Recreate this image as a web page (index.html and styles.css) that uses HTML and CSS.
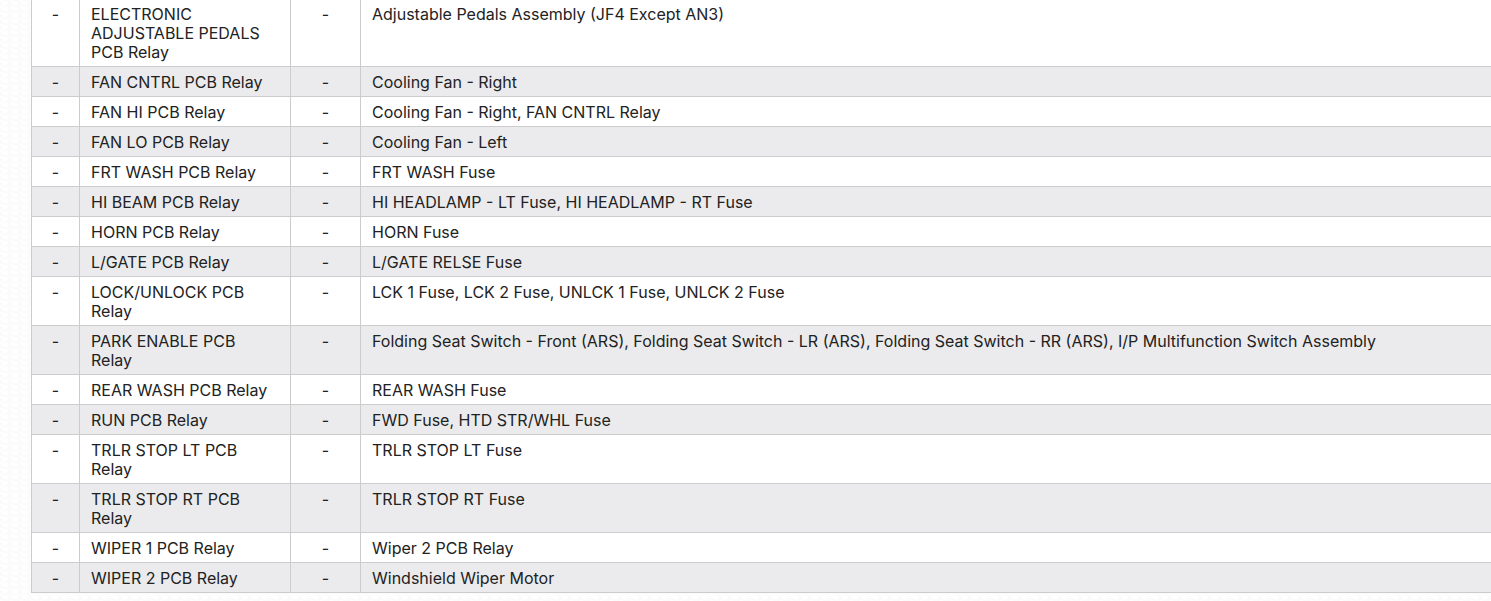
FILE: index.html
```html
<!DOCTYPE html>
<html lang="en">
<head>
<meta charset="utf-8">
<title>Relays</title>
<link rel="stylesheet" href="styles.css">
</head>
<body>
<div class="page">
<table class="relays">
<colgroup>
<col class="c-num"><col class="c-name"><col class="c-dash"><col class="c-desc">
</colgroup>
<tbody>
<tr><td class="ctr">-</td><td>ELECTRONIC ADJUSTABLE PEDALS PCB Relay</td><td class="ctr">-</td><td>Adjustable Pedals Assembly (JF4 Except AN3)</td></tr>
<tr><td class="ctr">-</td><td>FAN CNTRL PCB Relay</td><td class="ctr">-</td><td>Cooling Fan - Right</td></tr>
<tr><td class="ctr">-</td><td>FAN HI PCB Relay</td><td class="ctr">-</td><td>Cooling Fan - Right, FAN CNTRL Relay</td></tr>
<tr><td class="ctr">-</td><td>FAN LO PCB Relay</td><td class="ctr">-</td><td>Cooling Fan - Left</td></tr>
<tr><td class="ctr">-</td><td>FRT WASH PCB Relay</td><td class="ctr">-</td><td>FRT WASH Fuse</td></tr>
<tr><td class="ctr">-</td><td>HI BEAM PCB Relay</td><td class="ctr">-</td><td>HI HEADLAMP - LT Fuse, HI HEADLAMP - RT Fuse</td></tr>
<tr><td class="ctr">-</td><td>HORN PCB Relay</td><td class="ctr">-</td><td>HORN Fuse</td></tr>
<tr><td class="ctr">-</td><td>L/GATE PCB Relay</td><td class="ctr">-</td><td>L/GATE RELSE Fuse</td></tr>
<tr><td class="ctr">-</td><td>LOCK/UNLOCK PCB Relay</td><td class="ctr">-</td><td>LCK 1 Fuse, LCK 2 Fuse, UNLCK 1 Fuse, UNLCK 2 Fuse</td></tr>
<tr><td class="ctr">-</td><td>PARK ENABLE PCB Relay</td><td class="ctr">-</td><td>Folding Seat Switch - Front (ARS), Folding Seat Switch - LR (ARS), Folding Seat Switch - RR (ARS), I/P Multifunction Switch Assembly</td></tr>
<tr><td class="ctr">-</td><td>REAR WASH PCB Relay</td><td class="ctr">-</td><td>REAR WASH Fuse</td></tr>
<tr><td class="ctr">-</td><td>RUN PCB Relay</td><td class="ctr">-</td><td>FWD Fuse, HTD STR/WHL Fuse</td></tr>
<tr><td class="ctr">-</td><td>TRLR STOP LT PCB Relay</td><td class="ctr">-</td><td>TRLR STOP LT Fuse</td></tr>
<tr><td class="ctr">-</td><td>TRLR STOP RT PCB Relay</td><td class="ctr">-</td><td>TRLR STOP RT Fuse</td></tr>
<tr><td class="ctr">-</td><td>WIPER 1 PCB Relay</td><td class="ctr">-</td><td>Wiper 2 PCB Relay</td></tr>
<tr><td class="ctr">-</td><td>WIPER 2 PCB Relay</td><td class="ctr">-</td><td>Windshield Wiper Motor</td></tr>
</tbody>
</table>
</div>
</body>
</html>
```
FILE: styles.css
```css
html, body {
  margin: 0;
  padding: 0;
  height: 100%;
  overflow: hidden;
}
body {
  background-color: #fbfbfb;
  background-image:
    radial-gradient(ellipse 5px 3px at 50% 50%, #ffffff 60%, transparent 62%),
    radial-gradient(ellipse 5px 3px at 0 0, #ffffff 60%, transparent 62%);
  background-size: 10px 6px;
  font-family: "Inter", "Open Sans", sans-serif;
  color: #222;
}
.page {
  padding-left: 31px;
  overflow: hidden;
}
.relays {
  margin-top: -2px;
  width: 1620px;
  border-collapse: collapse;
  table-layout: fixed;
  font-size: 16px;
  line-height: 19px;
}
.c-num { width: 48px; }
.c-name { width: 211px; }
.c-dash { width: 70px; }
.c-desc { width: auto; }
.relays td {
  border: 1px solid #cccccc;
  padding: 6px 12px 4px 11px;
  vertical-align: top;
  text-align: left;
  background: #ffffff;
}
.relays tr:nth-child(even) td {
  background: #ebebed;
}
.relays td.ctr {
  text-align: center;
  padding-left: 0;
  padding-right: 0;
}
```
